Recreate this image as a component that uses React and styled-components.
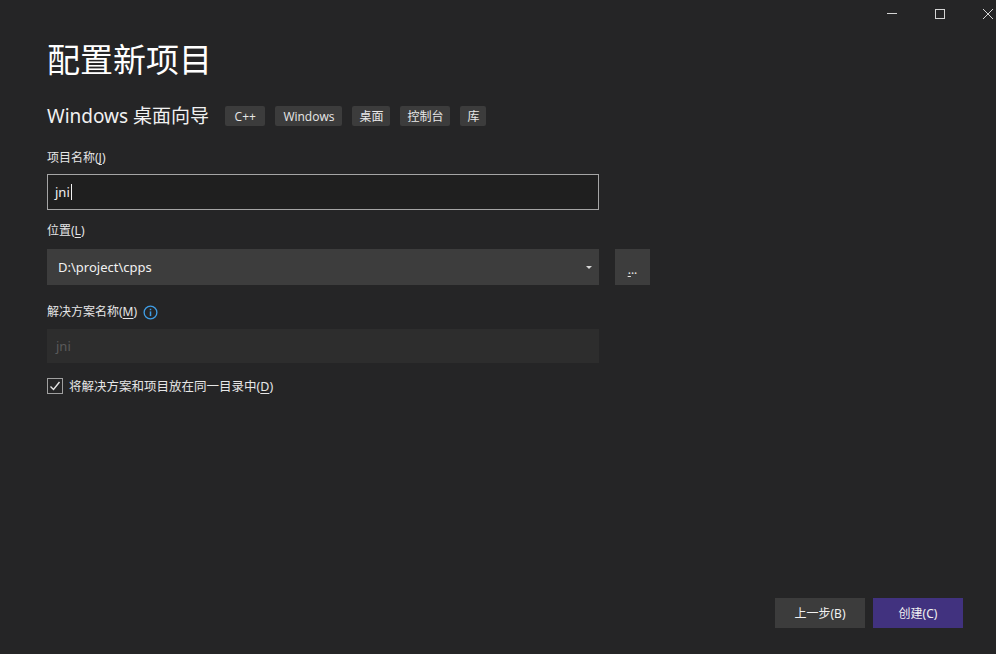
import React from "react";
import styled, { createGlobalStyle } from "styled-components";

const Global = createGlobalStyle`
  html, body { margin: 0; padding: 0; background: #252526; }
  body { font-family: "Noto Sans", "Noto Sans CJK SC", sans-serif; }
  * { box-sizing: border-box; }
`;

const Window = styled.div`
  width: 996px;
  height: 654px;
  background: #252526;
  display: flex;
  flex-direction: column;
  overflow: hidden;
  color: #e6e6e6;
`;

const TitleBar = styled.div`
  display: flex;
  justify-content: flex-end;
  align-items: flex-start;
  gap: 38px;
  padding: 9px 3px 0 0;
  height: 30px;
`;

const CtrlIcon = styled.svg`
  width: 10px;
  height: 10px;
  display: block;
`;

const Content = styled.div`
  display: flex;
  flex-direction: column;
  padding: 0 0 0 47px;
`;

const Title = styled.h1`
  margin: 6px 0 0 0;
  font-family: "Noto Sans CJK SC", sans-serif;
  font-weight: 400;
  font-size: 33px;
  line-height: 44px;
  color: #ffffff;
`;

const SubRow = styled.div`
  display: flex;
  align-items: center;
  margin-top: 25px;
  height: 22px;
`;

const SubTitle = styled.div`
  font-size: 19px;
  line-height: 22px;
  color: #f1f1f1;
  margin-right: 16px;
`;

const Tags = styled.div`
  display: flex;
  gap: 10px;
`;

const Tag = styled.span`
  display: inline-flex;
  align-items: center;
  height: 20px;
  padding: 0 ${(p) => p.$px || 7}px;
  background: #3c3c3c;
  border-radius: 2px;
  font-family: "Open Sans", "Noto Sans CJK SC", sans-serif;
  font-size: 12px;
  color: #e8e8e8;
`;

const Label = styled.div`
  display: flex;
  align-items: center;
  font-size: 12px;
  line-height: 18px;
  color: #e6e6e6;
  margin-top: ${(p) => p.$mt}px;
  u { text-decoration: underline; text-underline-offset: 2px; }
`;

const Field = styled.div`
  margin-top: ${(p) => p.$mt}px;
  display: flex;
  gap: 16px;
`;

const TextInput = styled.div`
  width: 552px;
  height: 36px;
  border: 1px solid #a5a5a5;
  background: #1f1f1f;
  display: flex;
  align-items: center;
  padding-left: 7px;
  font-size: 13px;
  color: #f1f1f1;
`;

const Caret = styled.span`
  display: inline-block;
  width: 1px;
  height: 16px;
  background: #f1f1f1;
  margin-left: 1px;
`;

const Select = styled.div`
  width: 552px;
  height: 36px;
  background: #3d3d3d;
  display: flex;
  align-items: center;
  justify-content: space-between;
  padding: 0 7px 0 11px;
  font-size: 13px;
  color: #f1f1f1;
`;

const Arrow = styled.span`
  width: 0;
  height: 0;
  border-left: 3px solid transparent;
  border-right: 3px solid transparent;
  border-top: 3px solid #d8d8d8;
`;

const Browse = styled.div`
  width: 35px;
  height: 36px;
  background: #3d3d3d;
  display: flex;
  align-items: center;
  justify-content: center;
  padding-top: 4px;
  font-size: 12px;
  color: #e6e6e6;
  u { text-underline-offset: 2px; }
`;

const Disabled = styled.div`
  width: 552px;
  height: 34px;
  background: #2d2d2d;
  display: flex;
  align-items: center;
  padding-left: 9px;
  font-size: 13px;
  color: #5b5b5b;
`;

const InfoIcon = styled.svg`
  width: 15px;
  height: 15px;
  margin-left: 6px;
`;

const CheckRow = styled.label`
  display: flex;
  align-items: center;
  gap: 6px;
  margin-top: 13px;
  font-size: 12.5px;
  color: #e6e6e6;
  u { text-underline-offset: 2px; }
`;

const CheckBox = styled.span`
  width: 16px;
  height: 16px;
  border: 1px solid #a0a0a0;
  display: flex;
  align-items: center;
  justify-content: center;
`;

const Spacer = styled.div`
  flex: 1;
`;

const Footer = styled.div`
  display: flex;
  justify-content: flex-end;
  gap: 8px;
  padding: 0 33px 26px 0;
`;

const Button = styled.button`
  width: 90px;
  height: 30px;
  border: none;
  background: ${(p) => (p.$primary ? "#41327f" : "#3c3c3c")};
  color: #f1f1f1;
  font-family: "Noto Sans", "Noto Sans CJK SC", sans-serif;
  font-size: 12px;
  padding: 0;
`;

export default function App() {
  return (
    <Window>
      <Global />
      <TitleBar>
        <CtrlIcon viewBox="0 0 10 10">
          <line x1="0" y1="4.5" x2="10" y2="4.5" stroke="#d4d4d4" strokeWidth="1" />
        </CtrlIcon>
        <CtrlIcon viewBox="0 0 10 10">
          <rect x="0.5" y="0.5" width="9" height="9" fill="none" stroke="#d4d4d4" strokeWidth="1" />
        </CtrlIcon>
        <CtrlIcon viewBox="0 0 10 10">
          <path d="M0 0 L10 10 M10 0 L0 10" stroke="#d4d4d4" strokeWidth="1" />
        </CtrlIcon>
      </TitleBar>
      <Content>
        <Title>配置新项目</Title>
        <SubRow>
          <SubTitle>Windows 桌面向导</SubTitle>
          <Tags>
            <Tag $px={9.5}>C++</Tag>
            <Tag $px={8}>Windows</Tag>
            <Tag>桌面</Tag>
            <Tag>控制台</Tag>
            <Tag>库</Tag>
          </Tags>
        </SubRow>
        <Label $mt={22}>
          <span>项目名称(<u>J</u>)</span>
        </Label>
        <Field $mt={7}>
          <TextInput>
            jni<Caret />
          </TextInput>
        </Field>
        <Label $mt={12}>
          <span>位置(<u>L</u>)</span>
        </Label>
        <Field $mt={9}>
          <Select>
            <span>D:\project\cpps</span>
            <Arrow />
          </Select>
          <Browse>
            <span>
              <u>.</u>..
            </span>
          </Browse>
        </Field>
        <Label $mt={18}>
          <span>解决方案名称(<u>M</u>)</span>
          <InfoIcon viewBox="0 0 16 16">
            <circle cx="8" cy="8" r="6.8" fill="none" stroke="#3f9ee6" strokeWidth="1.4" />
            <rect x="7.2" y="6.8" width="1.6" height="5" fill="#3f9ee6" />
            <rect x="7.2" y="4" width="1.6" height="1.6" fill="#3f9ee6" />
          </InfoIcon>
        </Label>
        <Field $mt={8}>
          <Disabled>jni</Disabled>
        </Field>
        <CheckRow>
          <CheckBox>
            <svg width="12" height="12" viewBox="0 0 12 12">
              <path d="M1.5 6.5 L4.5 9.5 L10.5 2" fill="none" stroke="#e6e6e6" strokeWidth="1.4" />
            </svg>
          </CheckBox>
          <span>将解决方案和项目放在同一目录中(<u>D</u>)</span>
        </CheckRow>
      </Content>
      <Spacer />
      <Footer>
        <Button>上一步(B)</Button>
        <Button $primary>创建(C)</Button>
      </Footer>
    </Window>
  );
}
